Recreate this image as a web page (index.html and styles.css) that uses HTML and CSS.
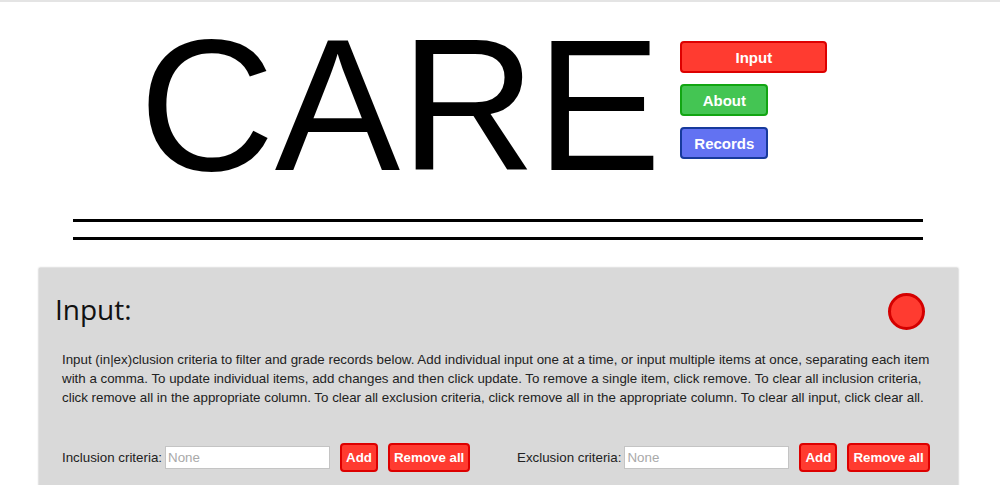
FILE: index.html
```html
<!DOCTYPE html>
<html lang="en">
<head>
<meta charset="utf-8">
<title>CARE</title>
<link rel="stylesheet" href="styles.css">
</head>
<body>
<header class="header">
  <h1 class="title">CARE</h1>
  <nav class="nav">
    <button class="nav-btn nav-input">Input</button>
    <button class="nav-btn nav-about">About</button>
    <button class="nav-btn nav-records">Records</button>
  </nav>
</header>
<div class="rules">
  <div class="rule"></div>
  <div class="rule"></div>
</div>
<section class="panel">
  <div class="panel-head">
    <h2 class="panel-title">Input:</h2>
    <span class="status-dot"></span>
  </div>
  <p class="panel-text">Input (in|ex)clusion criteria to filter and grade records below. Add individual input one at a time, or input multiple items at once, separating each item with a comma. To update individual items, add changes and then click update. To remove a single item, click remove. To clear all inclusion criteria, click remove all in the appropriate column. To clear all exclusion criteria, click remove all in the appropriate column. To clear all input, click clear all.</p>
  <div class="criteria">
    <div class="crit-col">
      <label class="crit-label">Inclusion criteria:</label>
      <input class="crit-input" type="text" placeholder="None">
      <button class="red-btn">Add</button>
      <button class="red-btn">Remove all</button>
    </div>
    <div class="crit-col">
      <label class="crit-label">Exclusion criteria:</label>
      <input class="crit-input" type="text" placeholder="None">
      <button class="red-btn">Add</button>
      <button class="red-btn">Remove all</button>
    </div>
  </div>
</section>
</body>
</html>
```

FILE: styles.css
```css
html {
  border-top: 2px solid #e4e4e4;
}
body {
  margin: 0;
  font-family: "Liberation Sans", Arial, sans-serif;
  color: #000;
  background: #fff;
  height: 600px;
}
.header {
  display: flex;
  align-items: flex-start;
  padding: 9px 0 0 139px;
  gap: 19px;
}
.title {
  margin: 0;
  font-size: 188px;
  font-weight: normal;
  line-height: 188px;
}
.nav {
  display: flex;
  flex-direction: column;
  align-items: flex-start;
  gap: 11px;
  padding-top: 30px;
}
.nav-btn {
  font-family: "Liberation Sans", Arial, sans-serif;
  font-weight: bold;
  font-size: 15px;
  color: #fff;
  height: 32px;
  border-radius: 4px;
  border: 2px solid;
  padding: 0;
}
.nav-input {
  width: 147px;
  background: #ff3b30;
  border-color: #dd0000;
}
.nav-about {
  width: 88px;
  background: #44c553;
  border-color: #12a512;
}
.nav-records {
  width: 88px;
  background: #6272f2;
  border-color: #173a9c;
}
.rules {
  margin: 20px 77px 0 73px;
  display: flex;
  flex-direction: column;
  gap: 15px;
}
.rule {
  height: 3px;
  background: #000;
}
.panel {
  margin: 28px 0 0 39px;
  width: 919px;
  background: #d9d9d9;
  box-shadow: 0 0 2px rgba(0, 0, 0, 0.35);
  padding: 24px 0 30px;
}
.panel-head {
  display: flex;
  justify-content: space-between;
  align-items: flex-start;
  padding: 0 33px 0 16px;
}
.panel-title {
  margin: 0;
  font-family: "Open Sans", sans-serif;
  font-weight: normal;
  font-size: 28px;
  line-height: 35px;
  color: #111;
}
.status-dot {
  width: 31px;
  height: 31px;
  margin-top: 1px;
  border-radius: 50%;
  background: #ff3b30;
  border: 3px solid #d40000;
}
.panel-text {
  margin: 20px 20px 0 23px;
  font-size: 13.33px;
  line-height: 19px;
  color: #222;
}
.criteria {
  display: grid;
  grid-template-columns: 455px 1fr;
  margin-top: 36px;
  padding-left: 23px;
}
.crit-col {
  display: flex;
  align-items: center;
}
.crit-label {
  font-size: 13.33px;
  color: #222;
  margin-right: 3px;
}
.crit-input {
  box-sizing: border-box;
  width: 165px;
  height: 23px;
  border: 1px solid #c4c4c4;
  background: #fff;
  font-family: "Liberation Sans", Arial, sans-serif;
  font-size: 13.33px;
  padding: 0 2px;
  margin: 0 10px 0 0;
}
.crit-input::placeholder {
  color: #a9a9a9;
}
.red-btn {
  height: 29px;
  padding: 0 4px;
  margin-right: 10px;
  background: #ff3b30;
  border: 2px solid #dd0000;
  border-radius: 4px;
  color: #fff;
  font-family: "Liberation Sans", Arial, sans-serif;
  font-weight: bold;
  font-size: 13.33px;
}
```
